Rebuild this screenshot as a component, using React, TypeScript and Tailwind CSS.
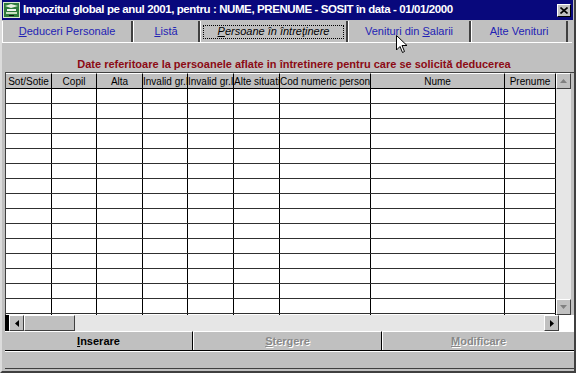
import React from "react";

const COLS = [
  { label: "Sot/Sotie", w: 46, align: "center" },
  { label: "Copil", w: 45, align: "center" },
  { label: "Alta", w: 46, align: "center" },
  { label: "Invalid gr.I", w: 45, align: "left" },
  { label: "Invalid gr.II", w: 46, align: "left" },
  { label: "Alte situatii", w: 46, align: "left" },
  { label: "Cod numeric personal", w: 91, align: "left" },
  { label: "Nume", w: 134, align: "center" },
  { label: "Prenume", w: 51, align: "center" },
];

const GRID = "grid grid-cols-[46px_45px_46px_45px_46px_46px_91px_134px_51px]";

function Raised({ className = "", children }: { className?: string; children?: React.ReactNode }) {
  return (
    <div className={`bg-[#c0c0c0] border-t border-l border-t-white border-l-white border-r border-b border-r-[#404040] border-b-[#404040] flex items-center justify-center ${className}`}>
      {children}
    </div>
  );
}

function Tab({ children, w, active }: { children: React.ReactNode; w: string; active?: boolean }) {
  return (
    <div className={`${w} h-full flex items-center justify-center border-r-2 border-r-[#404040] border-l border-l-white whitespace-nowrap`}>
      {active ? (
        <div className="border border-dotted border-black w-[141px] h-[14px] flex items-center justify-center italic text-black">{children}</div>
      ) : (
        <span className="text-[#2323b4]">{children}</span>
      )}
    </div>
  );
}

export default function App() {
  const rows = Array.from({ length: 16 });
  return (
    <div className="w-[576px] h-[373px] bg-[#c0c0c0] relative overflow-hidden font-['Liberation_Sans',Arial,sans-serif] text-[11px] text-black border-l-2 border-l-[#dcdcdc] border-r-2 border-r-[#404040] border-b-2 border-b-[#404040]">
      {/* title bar */}
      <div className="h-[20px] bg-[#08087c] flex items-center pl-[1px] pr-[2px] mr-[1px]">
        <svg width="17" height="16" viewBox="0 0 17 16" className="shrink-0">
          <rect x="0" y="0" width="17" height="16" fill="#d8e8d0" />
          <rect x="1" y="1" width="15" height="14" fill="#2e7a3c" />
          <path d="M2 4 L8 2 L15 4 L8 6 Z" fill="#e8f0e0" />
          <rect x="4" y="7" width="9" height="2" fill="#f0f0f0" />
          <rect x="3" y="10" width="11" height="2" fill="#c8e0c0" />
          <rect x="6" y="13" width="5" height="1" fill="#101010" />
        </svg>
        <span className="ml-[3px] text-white font-bold text-[11.5px] tracking-[-0.4px] whitespace-nowrap">
          Impozitul global pe anul 2001, pentru : NUME, PRENUME - SOSIT în data - 01/01/2000
        </span>
        <div className="ml-auto w-[14px] h-[13px] bg-[#c0c0c0] border-t border-l border-t-white border-l-white border-r border-b border-r-black border-b-black flex items-center justify-center">
          <svg width="8" height="7" viewBox="0 0 8 7">
            <path d="M0.5 0.5 L7.5 6.5 M7.5 0.5 L0.5 6.5" stroke="#000" strokeWidth="1.6" />
          </svg>
        </div>
      </div>

      {/* tabs */}
      <div className="mt-[1px] h-[22px] flex border-b border-b-white mr-[2px]">
        <Tab w="w-[131px]"><span className="underline">D</span>educeri Personale</Tab>
        <Tab w="w-[67px]"><span className="underline">L</span>istă</Tab>
        <Tab w="w-[148px]" active><span className="underline">P</span>ersoane în întreţinere</Tab>
        <Tab w="w-[123px]">Venituri din <span className="underline">S</span>alarii</Tab>
        <Tab w="w-[97px]">A<span className="underline">l</span>te Venituri</Tab>
      </div>

      {/* caption */}
      <div className="mt-[14px] h-[14px] flex items-center justify-center text-[#8c0a14] font-bold text-[11px] pl-[12px]">
        Date referitoare la persoanele aflate in întretinere pentru care se solicită deducerea
      </div>

      {/* grid + vertical scrollbar */}
      <div className="mt-[1px] ml-[3px] flex h-[243px] border-t border-l border-[#404040]">
        <div className="flex flex-col w-[550px]">
          <div className={`${GRID} h-[16px] bg-[#c0c0c0] border-b border-black text-[10px]`}>
            {COLS.map((c) => (
              <div
                key={c.label}
                className={`border-r border-black overflow-hidden whitespace-nowrap leading-[15px] border-t border-t-white ${c.align === "center" ? "text-center" : "text-left"}`}
              >
                {c.label}
              </div>
            ))}
          </div>
          <div className="flex-1 overflow-hidden bg-white">
            {rows.map((_, i) => (
              <div key={i} className={`${GRID} h-[15px] border-b border-[#303030]`}>
                {COLS.map((c) => (
                  <div key={c.label} className="border-r border-black" />
                ))}
              </div>
            ))}
          </div>
        </div>
        <div className="w-[15px] flex flex-col bg-[#e6e6e6]">
          <Raised className="h-[16px]">
            <svg width="7" height="4" viewBox="0 0 7 4"><path d="M3.5 0 L7 4 L0 4 Z" fill="#808080" /></svg>
          </Raised>
          <div className="flex-1" />
          <Raised className="h-[16px]">
            <svg width="7" height="4" viewBox="0 0 7 4"><path d="M0 0 L7 0 L3.5 4 Z" fill="#808080" /></svg>
          </Raised>
        </div>
      </div>

      {/* horizontal scrollbar */}
      <div className="ml-[3px] flex h-[16px]">
        <div className="w-[4px] bg-black" />
        <Raised className="w-[15px]">
          <svg width="4" height="7" viewBox="0 0 4 7"><path d="M4 0 L4 7 L0 3.5 Z" fill="#000" /></svg>
        </Raised>
        <Raised className="w-[51px]" />
        <div className="flex-1 bg-[#e6e6e6]" />
        <Raised className="w-[15px]">
          <svg width="4" height="7" viewBox="0 0 4 7"><path d="M0 0 L4 3.5 L0 7 Z" fill="#000" /></svg>
        </Raised>
        <div className="w-[15px] bg-white" />
      </div>

      {/* buttons */}
      <div className="ml-[3px] flex h-[20px] border-b border-black">
        <div className="w-[188px] flex items-center justify-center font-bold border-r border-r-black border-t border-t-white">
          <span className="underline">I</span>nserare
        </div>
        <div className="w-[189px] flex items-center justify-center font-bold text-[#888888] [text-shadow:1px_1px_0_#ffffff] border-r border-r-black border-l border-l-white border-t border-t-white">
          <span className="underline">S</span>tergere
        </div>
        <div className="flex-1 flex items-center justify-center font-bold text-[#888888] [text-shadow:1px_1px_0_#ffffff] border-l border-l-white border-t border-t-white">
          <span className="underline">M</span>odificare
        </div>
      </div>

      {/* status bar */}
      <div className="ml-[3px] h-[18px] border-b border-[#404040] border-t border-t-white" />

      {/* mouse cursor */}
      <svg width="12" height="19" viewBox="0 0 12 19" className="absolute left-[394px] top-[35px]">
        <path d="M0.5 0.5 L0.5 15 L4 11.5 L6.5 17.5 L8.5 16.5 L6 10.5 L11 10.5 Z" fill="#fff" stroke="#000" strokeWidth="1" />
      </svg>
    </div>
  );
}
